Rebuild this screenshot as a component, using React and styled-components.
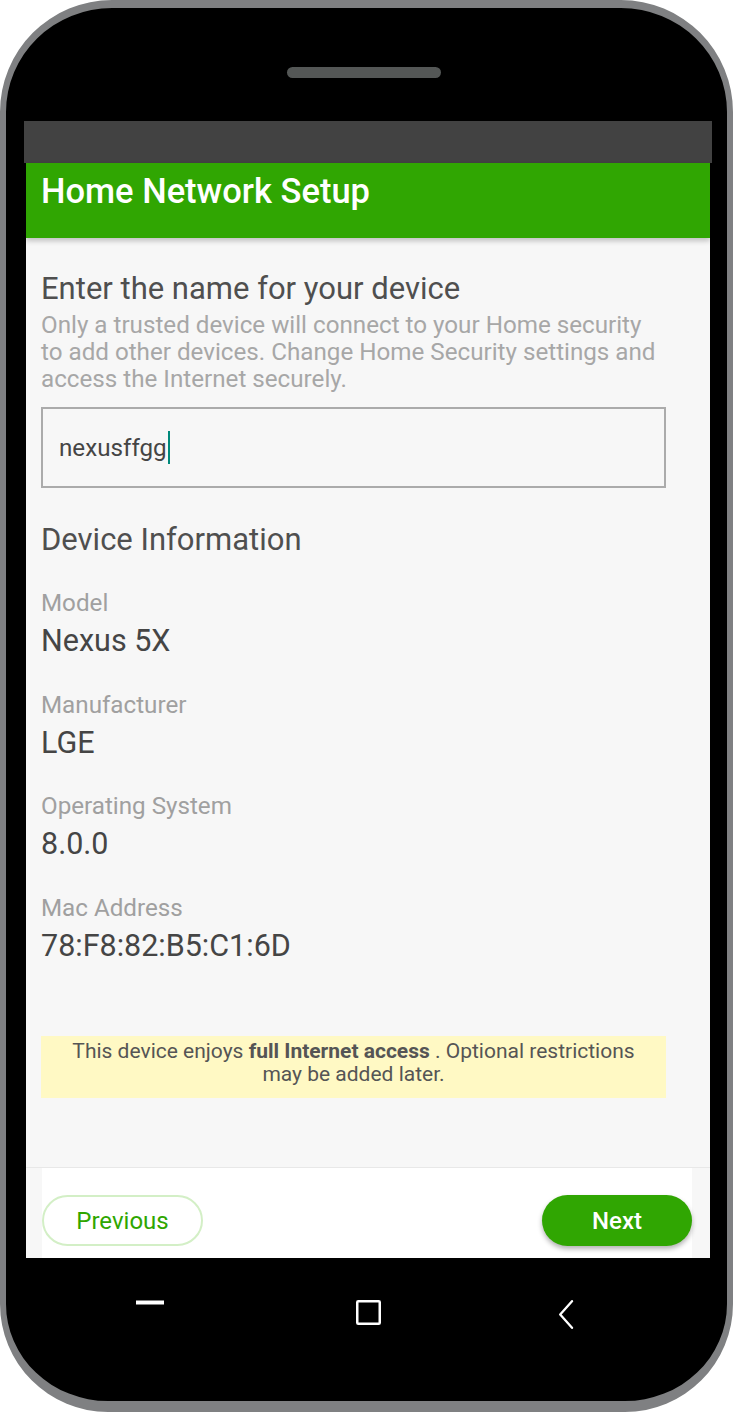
import React from 'react';
import styled, { createGlobalStyle } from 'styled-components';

const Global = createGlobalStyle`
  html, body { margin: 0; padding: 0; background: #ffffff; }
  body { font-family: Roboto, "Noto Sans", "Liberation Sans", sans-serif; }
  *, *::before, *::after { box-sizing: border-box; }
`;

const Phone = styled.div`
  width: 733px;
  height: 1412px;
  background: #000;
  border-style: solid;
  border-color: #7f8082;
  border-width: 8px 6px 11px 6px;
  border-radius: 112px 112px 108px 108px;
  display: flex;
  flex-direction: column;
  overflow: hidden;
`;

const TopBezel = styled.div`
  height: 113px;
  flex: none;
  padding: 59px 0 0 281px;
`;

const Speaker = styled.div`
  width: 154px;
  height: 11px;
  border-radius: 6px;
  background: #545756;
`;

const Screen = styled.div`
  height: 1137px;
  flex: none;
  margin: 0 15px 0 18px;
  display: flex;
  flex-direction: column;
`;

const StatusBar = styled.div`
  height: 42px;
  flex: none;
  background: #424242;
`;

const Body = styled.div`
  flex: 1;
  margin: 0 2px;
  background: #f7f7f7;
  display: flex;
  flex-direction: column;
  min-height: 0;
`;

const AppBar = styled.header`
  position: relative;
  z-index: 1;
  height: 75px;
  flex: none;
  background: #30a602;
  padding: 8px 15px 0;
  box-shadow: 0 3px 5px rgba(0, 0, 0, 0.22);
`;

const AppTitle = styled.h1`
  margin: 0;
  color: #ffffff;
  font-size: 34.5px;
  line-height: 40px;
  font-weight: 500;
`;

const Content = styled.main`
  flex: 1;
  padding: 33px 44px 0 15px;
  display: flex;
  flex-direction: column;
`;

const Heading = styled.h2`
  margin: ${(p) => p.$top || 0}px 0 0;
  color: #4f4f4f;
  font-size: 31px;
  line-height: 36px;
  font-weight: 400;
`;

const Description = styled.p`
  margin: 5px 0 0;
  max-width: 620px;
  color: #a7a7a7;
  font-size: 24.2px;
  line-height: 27px;
`;

const NameField = styled.div`
  margin-top: 14px;
  width: 625px;
  height: 81px;
  border: 2px solid #ababab;
  padding-left: 16px;
  display: flex;
  align-items: center;
  color: #454545;
  font-size: 24.2px;
`;

const Caret = styled.span`
  display: inline-block;
  width: 2px;
  height: 33px;
  margin-left: 1px;
  background: #00897b;
`;

const InfoGroup = styled.div`
  margin-top: ${(p) => p.$top}px;
  display: flex;
  flex-direction: column;
`;

const InfoLabel = styled.div`
  color: #a0a0a0;
  font-size: 24.2px;
  line-height: 30px;
`;

const InfoValue = styled.div`
  color: #454545;
  font-size: 30.5px;
  line-height: 46px;
`;

const Notice = styled.div`
  margin-top: 67px;
  width: 625px;
  height: 62px;
  background: #fff9c4;
  color: #555555;
  font-size: 21px;
  line-height: 23.4px;
  text-align: center;
  padding: 4px 30px 0;
  b { font-weight: 700; }
`;

const Footer = styled.footer`
  flex: none;
  height: 91px;
  border-top: 1px solid #e8e8e8;
  padding: 0 18px 0 16px;
`;

const FooterInner = styled.div`
  height: 90px;
  background: #ffffff;
  display: flex;
  justify-content: space-between;
  align-items: flex-start;
  padding-top: 27px;
`;

const PillButton = styled.button`
  height: 51px;
  width: ${(p) => p.$w}px;
  border-radius: 26px;
  font-family: inherit;
  font-size: 24px;
  cursor: pointer;
  padding: 0;
  ${(p) =>
    p.$primary
      ? `
    background: #30a602;
    border: none;
    color: #ffffff;
    font-weight: 500;
    box-shadow: 0 3px 5px rgba(0,0,0,0.3);
  `
      : `
    background: #ffffff;
    border: 2px solid #d3efc6;
    color: #2fa600;
    font-weight: 400;
  `}
`;

const NavBar = styled.nav`
  flex: 1;
  display: flex;
  align-items: flex-start;
  padding: 42px 0 0 130px;
`;

const NavIcon = styled.svg`
  display: block;
  flex: none;
  margin-left: ${(p) => p.$gap || 0}px;
`;

const groups = [
  ['Model', 'Nexus 5X'],
  ['Manufacturer', 'LGE'],
  ['Operating System', '8.0.0'],
  ['Mac Address', '78:F8:82:B5:C1:6D'],
];

export default function App() {
  return (
    <>
      <Global />
      <Phone>
        <TopBezel>
          <Speaker />
        </TopBezel>
        <Screen>
          <StatusBar />
          <Body>
            <AppBar>
              <AppTitle>Home Network Setup</AppTitle>
            </AppBar>
            <Content>
              <Heading>Enter the name for your device</Heading>
              <Description>
                Only a trusted device will connect to your Home security to add other devices. Change Home
                Security settings and access the Internet securely.
              </Description>
              <NameField>
                nexusffgg
                <Caret />
              </NameField>
              <Heading $top={34}>Device Information</Heading>
              {groups.map(([label, value], i) => (
                <InfoGroup key={label} $top={i === 0 ? 30 : 25.7}>
                  <InfoLabel>{label}</InfoLabel>
                  <InfoValue>{value}</InfoValue>
                </InfoGroup>
              ))}
              <Notice>
                This device enjoys <b>full Internet access</b> . Optional restrictions may be added later.
              </Notice>
            </Content>
            <Footer>
              <FooterInner>
                <PillButton $w={161}>Previous</PillButton>
                <PillButton $w={150} $primary>
                  Next
                </PillButton>
              </FooterInner>
            </Footer>
          </Body>
        </Screen>
        <NavBar>
          <NavIcon width="28" height="5" viewBox="0 0 28 5">
            <rect x="0" y="0.5" width="28" height="4" fill="#ffffff" />
          </NavIcon>
          <NavIcon $gap={192} width="25" height="25" viewBox="0 0 25 25">
            <rect x="1.25" y="1.25" width="22.5" height="22.5" rx="1" fill="none" stroke="#ffffff" strokeWidth="2.5" />
          </NavIcon>
          <NavIcon $gap={177} width="16" height="29" viewBox="0 0 16 29">
            <polyline
              points="14,1.2 2.2,14.5 14,27.8"
              fill="none"
              stroke="#ffffff"
              strokeWidth="2.3"
              strokeLinecap="round"
              strokeLinejoin="round"
            />
          </NavIcon>
        </NavBar>
      </Phone>
    </>
  );
}
